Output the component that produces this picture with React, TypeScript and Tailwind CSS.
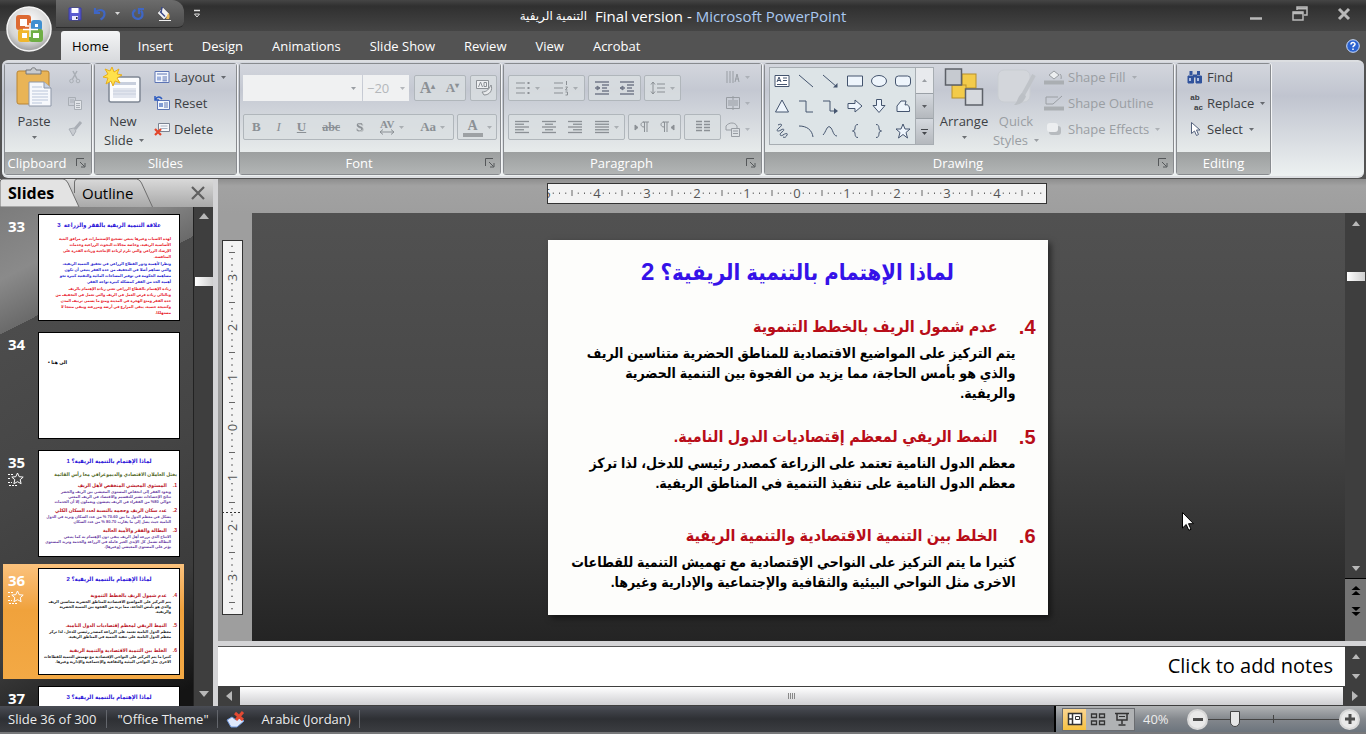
import type { ReactNode } from "react";
import { clsx } from "clsx";

const TABS = ["Home", "Insert", "Design", "Animations", "Slide Show", "Review", "View", "Acrobat"];

const SLIDE_TITLE = "لماذا الإهتمام بالتنمية الريفية؟";

interface Point {
  no: string;
  heading: string;
  lines: string[];
}

const POINTS: Point[] = [
  {
    no: "4.",
    heading: "عدم شمول الريف بالخطط التنموية",
    lines: [
      "يتم التركيز على المواضيع الاقتصادية للمناطق الحضرية متناسين الريف",
      "والذي هو بأمس الحاجة، مما يزيد من الفجوة بين التنمية الحضرية",
      "والريفية.",
    ],
  },
  {
    no: "5.",
    heading: "النمط الريفي لمعظم إقتصاديات الدول النامية.",
    lines: [
      "معظم الدول النامية تعتمد على الزراعة كمصدر رئيسي للدخل، لذا تركز",
      "معظم الدول النامية على تنفيذ التنمية في المناطق الريفية.",
    ],
  },
  {
    no: "6.",
    heading: "الخلط بين التنمية الاقتصادية والتنمية الريفية",
    lines: [
      "كثيرا ما يتم التركيز على النواحي الإقتصادية مع تهميش التنمية للقطاعات",
      "الاخرى مثل النواحي البيئية والثقافية والإجتماعية والإدارية وغيرها.",
    ],
  },
];

const SLIDE_33 = [
  {
    color: "text-[#e8202a]",
    lines: [
      "لهذه الاسباب وغيرها ينبغي تشجيع الإستثمارات في مرافق البنية",
      "الأساسية الريفية، وخاصة مجالات البحوث الزراعية وخدمات",
      "الإرشاد الزراعي والتي تلزم لزيادة الإنتاجية وزيادة القدرة على",
      "المنافسة.",
    ],
  },
  {
    color: "text-[#2a1fd0]",
    lines: [
      "ونظرا لأهمية ودور القطاع الزراعي في تحقيق التنمية الريفية،",
      "والتي تساهم أصلا في التخفيف من حدة الفقر ينبغي أن تكون",
      "مساهمة الحكومة في توفير المساحات المائية والتقنية كبيرة نحو",
      "أهمية الحد من الفقر كمشكلة كبيرة تواجه الفقر.",
    ],
  },
  {
    color: "text-[#e8202a]",
    lines: [
      "زيادة الإهتمام بالقطاع الزراعي تعني زيادة الإهتمام بالريف",
      "وبالتالي زيادة فرص العمل في الريف والتي تعمل في التخفيف من",
      "حدة الفقر ومنع الهجرة في المدينة ومنع ما يسمى ترييف المدن",
      "وكنتيجة حتمية، يبقى المزارع في أرضه ومزرعته ويبقى منتجا لا",
      "مستهلكا.",
    ],
  },
];

const SLIDE_35 = [
  {
    no: "1.",
    heading: "المستوى المعيشي المنخفض لأهل الريف",
    lines: [
      "ويعود الفقر إلى انخفاض المستوى المعيشي بين الريف والحضر",
      "نتائج الإحصاءات تشير للتقسيم والاقتصاد في الريف المعني",
      "حوالي 80% من الفقراء في الريف يعيشون ويعملون إلا أن الخدمات",
    ],
  },
  {
    no: "2.",
    heading: "عدد سكان الريف وحجمه بالنسبة لعدد السكان الكلي",
    lines: [
      "يشكل في معظم الدول ما بين 60-70 % من عدد السكان ويزيد في الدول",
      "النامية حيث يصل إلى ما يقارب 70-80 % من عدد السكان",
    ],
  },
  {
    no: "3.",
    heading: "البطالة والفقر والأمية العالية",
    lines: [
      "الانتاج الذي يزرعه أهل الريف يبقى دون الإهتمام به كما ينبغي",
      "البطالة تشمل كل الإيدي الغير عاملة في الزراعة والخدمة وتزيد المستوى",
      "يؤثر على المستوى المعيشي (وغيرها).",
    ],
  },
];

/* ---------- small shared pieces ---------- */

function Caret({ className }: { className?: string }) {
  return (
    <svg viewBox="0 0 5 3" className={clsx("h-[3px] w-[5px] shrink-0 fill-current", className)} aria-hidden="true">
      <path d="M0 0h5L2.500 3z" />
    </svg>
  );
}

function Icon({ children, box = "0 0 16 16", className = "size-4" }: { children: ReactNode; box?: string; className?: string }) {
  return (
    <svg viewBox={box} className={clsx("shrink-0", className)} fill="none" stroke="currentColor" aria-hidden="true">
      {children}
    </svg>
  );
}

function Lines({ rows }: { rows: [number, number][] }) {
  return (
    <Icon className="size-4">
      {rows.map(([x, w], i) => (
        <path key={i} d={`M${x} ${2.5 + i * 2.75}h${w}`} strokeWidth="1.300" />
      ))}
    </Icon>
  );
}

function Group({ label, width, launcher, children }: { label: string; width: string; launcher?: boolean; children: ReactNode }) {
  return (
    <section
      aria-label={label}
      className={clsx(
        "flex shrink-0 flex-col rounded-[3px] border border-[#888b8f] shadow-[1px_0_0_#f4f5f6]",
        width,
      )}
    >
      <div className="flex h-[88px] bg-linear-to-b from-[#d3d6dd] via-[#c4c8d2] via-30% to-[#e7ebeb]">{children}</div>
      <div className="flex h-[22px] items-center bg-linear-to-b from-[#9c9f9f] to-[#b2b5b5] text-white">
        <span className="flex-1 text-center whitespace-nowrap">{label}</span>
        {launcher && (
          <button type="button" aria-label={`${label} options`} className="mr-1 ml-1.5 text-[#55585a]">
            <Icon className="size-3" box="0 0 12 12">
              <path d="M1.500 9V1.500H9M5 5l4.500 4.500M10 6v4H6" />
            </Icon>
          </button>
        )}
      </div>
    </section>
  );
}

function Strip({ width, children }: { width: string; children: ReactNode }) {
  return (
    <div
      className={clsx(
        "flex h-[26px] items-center justify-around rounded-[2px] border border-[#b0b6bb] bg-[#d9dee1]/80 text-[#8b9095]",
        width,
      )}
    >
      {children}
    </div>
  );
}

function Tool({ label, caret, children }: { label: string; caret?: boolean; children: ReactNode }) {
  return (
    <button type="button" aria-label={label} className="flex h-full items-center gap-1 font-[Liberation_Serif,serif] font-bold">
      {children}
      {caret && <Caret className="opacity-60" />}
    </button>
  );
}

function RowButton({ icon, label, caret, disabled }: { icon: ReactNode; label: string; caret?: boolean; disabled?: boolean }) {
  return (
    <button
      type="button"
      disabled={disabled}
      className={clsx("flex h-[26px] items-center gap-1 whitespace-nowrap", disabled ? "text-[#9a9ea3]" : "text-[#3c3f44]")}
    >
      {icon}
      {label}
      {caret && <Caret className="ml-0.5 opacity-70" />}
    </button>
  );
}

/* ---------- title bar and tabs ---------- */

function OfficeOrb() {
  return (
    <button type="button" aria-label="Office Button" className="absolute top-1.5 left-1.5">
      <svg viewBox="0 0 46 46" className="size-[46px]" aria-hidden="true">
        <defs>
          <radialGradient id="orb" cx="50%" cy="35%" r="65%">
            <stop offset="0" stopColor="#ffffff" />
            <stop offset="0.700" stopColor="#d4d4d4" />
            <stop offset="1" stopColor="#9c9c9c" />
          </radialGradient>
        </defs>
        <circle cx="23" cy="23" r="22" fill="url(#orb)" stroke="#f4f4f4" strokeWidth="1.500" />
        <g fill="#fff" strokeWidth="4">
          <rect x="12" y="11" width="11" height="11" rx="1" stroke="#dd6a33" />
          <rect x="27" y="16" width="7" height="7" rx="1" stroke="#3f8fd0" />
          <rect x="14" y="25" width="9" height="9" rx="1" stroke="#f0b62c" />
          <rect x="25" y="25" width="10" height="9" rx="1" stroke="#6fae45" />
        </g>
        <path d="M17 23.500h15M24 17v14M19 20h4M27 28h4" stroke="#fff" strokeWidth="1.500" />
      </svg>
    </button>
  );
}

function TitleBar() {
  return (
    <div className="flex h-[31px] items-start justify-between bg-linear-to-b from-[#454545] via-[#303030] via-20% to-[#454545]">
      <div className="flex w-[230px] items-center pl-14">
        <div className="flex h-7 w-32 items-center gap-[11px] rounded-tr-xl rounded-br-md border-b border-[#2c2c2c] bg-linear-to-b from-[#6c6c6c] to-[#4b4b4b] pl-3">
          <button type="button" aria-label="Save">
            <Icon className="size-3.5" box="0 0 14 14">
              <path d="M1 1h12v12H1z" fill="#5a5bd0" stroke="#3b3ca8" />
              <path d="M3.500 1h7v5h-7z" fill="#fff" stroke="none" />
              <path d="M4 9h6v4H4z" fill="#e8e8ff" stroke="none" />
              <path d="M8 10h1.500v2H8z" fill="#333" stroke="none" />
            </Icon>
          </button>
          <button type="button" aria-label="Undo" className="flex items-center gap-2 text-[#d8d8d8]">
            <Icon className="size-3.5" box="0 0 14 14">
              <path d="M2 1v5h5M2.500 5.500C5 2 11 2 11.500 6.500c0 3-2 5-4 6" stroke="#3f66c4" strokeWidth="2.200" />
            </Icon>
            <Caret />
          </button>
          <button type="button" aria-label="Repeat">
            <Icon className="size-3.5" box="0 0 14 14">
              <path d="M4.500 3C1 4.500 1 9 4 11s7.500.5 7.500-3.500c0-1.500-.5-3-1.500-4M8 7V2h5" stroke="#3f66c4" strokeWidth="2.200" />
            </Icon>
          </button>
          <button type="button" aria-label="Shape Fill">
            <Icon className="size-4">
              <path d="M2 7l5-5 6 6-5 5z" fill="#f2f2f2" stroke="#cfcfcf" />
              <path d="M4 5.500l5 5M6 1l-1 6" stroke="#3b4a88" strokeWidth="1.500" />
              <path d="M12 7c2 1 2 4 1 6h-3z" fill="#e8b95a" stroke="none" />
              <path d="M3 14.500h12" stroke="#f0f0f0" />
            </Icon>
          </button>
        </div>
        <button type="button" aria-label="Customize Quick Access Toolbar" className="ml-2 text-[#e2e2e2]">
          <Icon className="size-2.5" box="0 0 10 10">
            <path d="M2 1.500h6" strokeWidth="1.500" />
            <path d="M2.500 5L5 8l2.500-3z" />
          </Icon>
        </button>
      </div>
      <h1 className="flex items-center gap-2 pt-[7px] text-[15px] text-white whitespace-nowrap">
        <span dir="rtl" className="text-xs">
          التنمية الريفية
        </span>
        <span>
          Final version - <span className="text-[#a9c8f0]">Microsoft PowerPoint</span>
        </span>
      </h1>
      <div className="flex w-[230px] items-center justify-end gap-7 pt-1.5 pr-3.5 text-[#b9b9b9]">
        <button type="button" aria-label="Minimize">
          <Icon>
            <path d="M2 12.500h12" strokeWidth="2.500" />
          </Icon>
        </button>
        <button type="button" aria-label="Restore">
          <Icon>
            <path d="M5 4V1h10v8h-3" strokeWidth="1.500" />
            <path d="M5 2.500h10" strokeWidth="2" />
            <path d="M1 6h10v8H1z" strokeWidth="1.500" />
            <path d="M1 7h10" strokeWidth="2.500" />
          </Icon>
        </button>
        <button type="button" aria-label="Close">
          <Icon>
            <path d="M3 3l10 10M13 3L3 13" strokeWidth="3" />
          </Icon>
        </button>
      </div>
    </div>
  );
}

function TabBar() {
  return (
    <nav aria-label="Ribbon tabs" className="flex h-[29px] gap-px bg-[#535353] pl-[58px]">
      {TABS.map((tab, i) => (
        <button
          key={tab}
          type="button"
          className={clsx(
            "mx-[3px] px-[11px]",
            i === 0 ? "rounded-t-[3px] bg-linear-to-b from-[#f4f5f6] to-[#d9dbde] text-black" : "text-white",
          )}
        >
          {tab}
        </button>
      ))}
      <button type="button" aria-label="Help" className="mr-1.5 ml-auto">
        <svg viewBox="0 0 14 14" className="size-3.5" aria-hidden="true">
          <circle cx="7" cy="7" r="6.300" fill="#2a62d0" stroke="#cfe0ff" />
          <path d="M5 5.500C5 3 9 3 9 5.300c0 1.300-2 1.500-2 3M7 9.500v1.500" stroke="#fff" strokeWidth="1.500" fill="none" />
        </svg>
      </button>
    </nav>
  );
}

/* ---------- ribbon ---------- */

function ClipboardGroup() {
  return (
    <Group label="Clipboard" width="w-[88px]" launcher>
      <button type="button" className="flex w-[58px] flex-col items-center pt-0.5 text-[#3c3f44]">
        <svg viewBox="0 0 36 40" className="h-[42px] w-9" aria-hidden="true">
          <rect x="1" y="4" width="32" height="33" rx="2" fill="#e9b456" stroke="#b98432" />
          <path d="M10 7V3h5c0-3 5-3 5 0h5v4z" fill="#c9cbce" stroke="#74777b" />
          <path d="M13 15h15l7 6v18H13z" fill="#f6f8fc" stroke="#8e97a8" />
          <path d="M28 15v6h7" fill="#c7d2e4" stroke="#8e97a8" />
          <path d="M16 20h10M16 24h16M16 27h16M16 30h16M16 33h16M16 36h10" stroke="#b9c5da" />
        </svg>
        <span className="mt-1">Paste</span>
        <Caret className="mt-1.5 opacity-70" />
      </button>
      <div className="flex flex-col items-center pl-1 text-[#a9aeb5]">
        <button type="button" aria-label="Cut" className="flex h-[26px] items-center">
          <Icon>
            <path d="M6 2l4 8M10 2L5.500 10" strokeWidth="1.500" />
            <circle cx="4.500" cy="12" r="1.800" />
            <circle cx="11" cy="12" r="1.800" />
          </Icon>
        </button>
        <button type="button" aria-label="Copy" className="flex h-[26px] items-center">
          <Icon>
            <path d="M1.500 2.500h7v8h-7zM3 5h4M3 7h4" />
            <path d="M7.500 5.500h7v9h-7z" fill="#e2e5e9" />
            <path d="M9 8.500h4M9 10.500h4M9 12.500h4" />
          </Icon>
        </button>
        <button type="button" aria-label="Format Painter" className="flex h-[26px] items-center">
          <Icon>
            <path d="M14 1L8 8" strokeWidth="3" />
            <path d="M2 8l5-1 2 3-3 5z" fill="#c8ccd1" />
          </Icon>
        </button>
      </div>
    </Group>
  );
}

function SlidesGroup() {
  return (
    <Group label="Slides" width="w-[143px]">
      <button type="button" className="flex w-14 flex-col items-center pt-0.5 leading-[19px] text-[#3c3f44]">
        <svg viewBox="0 0 40 40" className="h-[42px] w-10" aria-hidden="true">
          <rect x="6" y="10" width="31" height="25" rx="2" fill="#fbfcfe" stroke="#7f8794" strokeWidth="1.500" />
          <rect x="10" y="15" width="23" height="3" fill="#c8cfdd" />
          <rect x="10" y="21" width="23" height="10" fill="#e1e5ee" />
          <path d="M10 24h23M10 27h23" stroke="#c8cfdd" />
          <path d="M9 0l2 5 5-3-2 5 5 1-5 3 3 5-5-2-2 5-2-5-5 3 2-6-5-1 5-3-3-5 5 2z" fill="#ffe14a" stroke="#e8ae1c" />
        </svg>
        <span className="mt-1">New</span>
        <span className="flex items-center gap-1.5 pl-0.5">
          Slide <Caret className="opacity-70" />
        </span>
      </button>
      <div className="pl-[3px]">
        <RowButton
          label="Layout"
          caret
          icon={
            <Icon>
              <path d="M1 2.500h14v11H1z" fill="#f4f7fd" stroke="#5c74b4" />
              <path d="M3 5h10" stroke="#5c74b4" />
              <path d="M3 7.500h4v4H3z" fill="#9fb2de" stroke="none" />
              <path d="M8.500 8h4.500M8.500 10h4.500M8.500 11.800h4.500" stroke="#5c74b4" />
            </Icon>
          }
        />
        <RowButton
          label="Reset"
          icon={
            <Icon>
              <path d="M3.500 5.500h12v9h-12z" fill="#f4f7fd" stroke="#5c74b4" />
              <path d="M5 8h4v4H5z" fill="#7f9ad4" stroke="none" />
              <path d="M10 8h4M10 10h4M10 12h4" stroke="#5c74b4" />
              <path d="M1 1v4h4M1.500 4.500C3 1.500 6 1 8 4" stroke="#2d5bc0" strokeWidth="1.500" />
            </Icon>
          }
        />
        <RowButton
          label="Delete"
          icon={
            <Icon>
              <path d="M4.500 2.500h11v8h-11z" fill="#f6f8fb" stroke="#7b8391" />
              <path d="M6.500 5h7M6.500 7.500h7" stroke="#a9b2c2" />
              <path d="M1 8l6 6M7 8l-6 6" stroke="#e2452a" strokeWidth="2.200" />
            </Icon>
          }
        />
      </div>
    </Group>
  );
}

function FontGroup() {
  return (
    <Group label="Font" width="w-[262px]" launcher>
      <div className="flex flex-1 flex-col gap-[13px] px-[3px] pt-[11px]">
        <div className="flex justify-between">
          <div className="flex gap-px">
            <label className="flex h-[26px] w-[119px] items-center bg-[#f0f1f2] pr-1.5 text-[#9a9ea3]">
              <input aria-label="Font" className="min-w-0 flex-1 bg-transparent outline-none" />
              <Caret />
            </label>
            <label className="flex h-[26px] w-[46px] items-center bg-[#f0f1f2] pr-1 pl-1 text-[#b4b7bb]">
              <input aria-label="Font size" defaultValue="−20" className="min-w-0 flex-1 bg-transparent outline-none" />
              <Caret />
            </label>
          </div>
          <Strip width="w-[52px]">
            <Tool label="Grow Font">
              <span className="text-base">
                A<sup className="text-[8px]">▴</sup>
              </span>
            </Tool>
            <Tool label="Shrink Font">
              <span>
                A<sup className="text-[8px]">▾</sup>
              </span>
            </Tool>
          </Strip>
          <Strip width="w-[27px]">
            <Tool label="Clear Formatting">
              <Icon className="size-5" box="0 0 20 20">
                <path d="M2.500 2.500h12v8h-12z" fill="#eef0f2" />
                <path d="M4.500 9l2-5 2 5M10 4.500h2.500v4H10z" />
                <path d="M17 7c2 5-1 10-7 10l-2-3c5 0 7-3 9-7z" fill="#e9ebed" />
              </Icon>
            </Tool>
          </Strip>
        </div>
        <div className="flex justify-between">
          <Strip width="w-[211px]">
            <Tool label="Bold">B</Tool>
            <Tool label="Italic">
              <i className="font-normal">I</i>
            </Tool>
            <Tool label="Underline">
              <u>U</u>
            </Tool>
            <Tool label="Strikethrough">
              <s className="text-xs">abc</s>
            </Tool>
            <Tool label="Text Shadow">
              <span className="drop-shadow-[1px_1px_0_#b4b8bb]">S</span>
            </Tool>
            <Tool label="Character Spacing" caret>
              <span className="flex flex-col items-center text-[11px] leading-[9px]">
                AV
                <Icon className="h-1.5 w-4" box="0 0 16 6">
                  <path d="M1 3h14M4 .5L1 3l3 2.500M12 .5L15 3l-3 2.500" />
                </Icon>
              </span>
            </Tool>
            <Tool label="Change Case" caret>
              Aa
            </Tool>
          </Strip>
          <Strip width="w-10">
            <Tool label="Font Color" caret>
              <span className="w-5 border-b-4 border-[#9da1a4] text-center text-sm leading-[15px]">A</span>
            </Tool>
          </Strip>
        </div>
      </div>
    </Group>
  );
}

function ParagraphGroup() {
  return (
    <Group label="Paragraph" width="w-[259px]" launcher>
      <div className="flex flex-col gap-[13px] pt-[11px] pl-1">
        <div className="flex gap-[3px]">
          <Strip width="w-[77px]">
            <Tool label="Bullets" caret>
              <Icon>
                <path d="M1 3h9M1 8h9M1 13h9" />
                <path d="M12.500 3h2M12.500 8h2M12.500 13h2" strokeWidth="2" />
              </Icon>
            </Tool>
            <Tool label="Numbering" caret>
              <Icon>
                <path d="M1 3h9M1 8h9M1 13h9M13.500 1v4M12.500 7h2l-2 3h2M12.500 12h2v3h-2" />
              </Icon>
            </Tool>
          </Strip>
          <Strip width="w-[53px]">
            <Tool label="Decrease List Level">
              <Icon className="size-4 text-[#747b8a]">
                <path d="M1 2h14M8 5h7M8 8h5M8 11h7M1 14h14M1 8h5" strokeWidth="1.500" />
                <path d="M3 6v4l3-2z" fill="currentColor" />
              </Icon>
            </Tool>
            <Tool label="Increase List Level">
              <Icon className="size-4 text-[#747b8a]">
                <path d="M1 2h14M8 5h7M8 8h5M8 11h7M1 14h14M1 8h5" strokeWidth="1.500" />
                <path d="M4 6v4L1 8z" fill="currentColor" />
              </Icon>
            </Tool>
          </Strip>
          <Strip width="w-[37px]">
            <Tool label="Line Spacing" caret>
              <Icon>
                <path d="M3 2v12M1 4.500L3 2l2 2.500M1 11.500L3 14l2-2.500M7 4h8M7 8h8M7 12h8" />
              </Icon>
            </Tool>
          </Strip>
        </div>
        <div className="flex gap-[3px]">
          <Strip width="w-[117px]">
            <Tool label="Align Left">
              <Lines rows={[[1, 14], [1, 9], [1, 14], [1, 9], [1, 14]]} />
            </Tool>
            <Tool label="Center">
              <Lines rows={[[1, 14], [4, 8], [1, 14], [4, 8], [1, 14]]} />
            </Tool>
            <Tool label="Align Right">
              <Lines rows={[[1, 14], [6, 9], [1, 14], [6, 9], [1, 14]]} />
            </Tool>
            <Tool label="Justify" caret>
              <Lines rows={[[1, 14], [1, 14], [1, 14], [1, 14], [1, 14]]} />
            </Tool>
          </Strip>
          <Strip width="w-[53px]">
            <Tool label="Left-to-Right">
              <Icon>
                <path d="M1 6v5l3-2.500z" fill="currentColor" />
                <path d="M9 3h6M10.500 3v10M13 3v10M10 3c-4 0-4 5 0 5" />
              </Icon>
            </Tool>
            <Tool label="Right-to-Left">
              <Icon>
                <path d="M15 6v5l-3-2.500z" fill="currentColor" />
                <path d="M4 3h6M5.500 3v10M8 3v10M5 3C1 3 1 8 5 8" />
              </Icon>
            </Tool>
          </Strip>
          <Strip width="w-[37px]">
            <Tool label="Columns">
              <Icon>
                <path d="M1 2.500h6M1 5.500h6M1 8.500h6M1 11.500h6M9 2.500h6M9 5.500h6M9 8.500h6M9 11.500h6" strokeWidth="1.500" />
              </Icon>
            </Tool>
          </Strip>
        </div>
      </div>
      <div className="ml-auto flex w-9 flex-col text-[#989da3]">
        {[
          { label: "Text Direction", d: "M2 2v12M5 2v12M8 2v12M10 13l2-8 2 8M10.500 10h3.500" },
          { label: "Align Text", d: "M1.500 2.500h13v11h-13zM8 1v4M8 15v-4M3 8h10M3 10h10M3 6h10" },
          { label: "Convert to SmartArt", d: "M1 5c3-4 9-4 11 0v2M1 5v4h5M6.500 7.500h8v8h-8zM8 10h5M8 12.500h5" },
        ].map((t) => (
          <button key={t.label} type="button" aria-label={t.label} className="flex h-[26px] items-center gap-1">
            <Icon>
              <path d={t.d} />
            </Icon>
            <Caret className="opacity-60" />
          </button>
        ))}
      </div>
    </Group>
  );
}

const SHAPES: { name: string; node: ReactNode }[] = [
  {
    name: "Text Box",
    node: (
      <>
        <path d="M1 2.500h14v11H1z" fill="#fff" />
        <path d="M3 9l2-5 2 5M3.500 7.500h3M9 5h4M9 7.500h4M3 11.500h10" />
      </>
    ),
  },
  { name: "Line", node: <path d="M1 2l14 12" /> },
  {
    name: "Arrow",
    node: (
      <>
        <path d="M1 2l14 12" />
        <path d="M15.500 14.500V10l-4.500 4.500z" fill="currentColor" stroke="none" />
      </>
    ),
  },
  { name: "Rectangle", node: <path d="M.5 3h15v10H.5z" fill="#eef5fc" /> },
  { name: "Oval", node: <ellipse cx="8" cy="8" rx="7.500" ry="5.500" fill="#eef5fc" /> },
  { name: "Rounded Rectangle", node: <rect x=".5" y="3" width="15" height="10" rx="3" fill="#eef5fc" /> },
  { name: "Triangle", node: <path d="M8 2l6.500 12h-13z" fill="#eef5fc" /> },
  { name: "Elbow Connector", node: <path d="M1 3h7v11h7" /> },
  {
    name: "Elbow Arrow",
    node: (
      <>
        <path d="M1 3h7v10h5" />
        <path d="M12 10l4 3-4 3z" fill="currentColor" stroke="none" />
      </>
    ),
  },
  { name: "Right Arrow", node: <path d="M1 5.500h7V2l7 6-7 6v-3.500H1z" fill="#eef5fc" /> },
  { name: "Down Arrow", node: <path d="M5.500 1.500h5v6H14L8 14.500 2 7.500h3.500z" fill="#eef5fc" /> },
  { name: "Freeform", node: <path d="M2 13.500V8l4-5h5l-1 4c3-1 5 1 4.500 6.500z" fill="#eef5fc" /> },
  { name: "Scribble", node: <path d="M4 2c4-2 5 0 1 3s-1 4 2 2 4 0 1 2-2 5 1 3 5-2 4 0-2 3-4 2" /> },
  { name: "Arc", node: <path d="M1 3c8 0 13 4 14 11" /> },
  { name: "Curve", node: <path d="M1 12C4 9 5 2 8 4s3 9 7 9" /> },
  { name: "Left Brace", node: <path d="M11 1.500C6 1.500 10 8 5.500 8c4.500 0 .5 6.500 5.500 6.500" /> },
  { name: "Right Brace", node: <path d="M5 1.500C10 1.500 6 8 10.500 8 6 8 10 14.500 5 14.500" /> },
  { name: "Star", node: <path d="M8 1l2 5h5l-4 3.500 1.500 5.500L8 11.500 3.500 15 5 9.500 1 6h5z" fill="#eef5fc" /> },
];

function DrawingGroup() {
  return (
    <Group label="Drawing" width="w-[410px]" launcher>
      <div className="mt-[3px] ml-1 flex h-[78px] w-[165px] shrink-0 border border-[#a7adb2]">
        <div className="grid flex-1 grid-cols-6 place-items-center bg-[#dde4e7] text-[#44546e]">
          {SHAPES.map((s) => (
            <button key={s.name} type="button" aria-label={s.name}>
              <Icon>{s.node}</Icon>
            </button>
          ))}
        </div>
        <div className="flex w-[18px] flex-col divide-y divide-[#9aa0a6] border-l border-[#a7adb2]">
          <button type="button" aria-label="Previous shapes" className="flex flex-1 items-center justify-center bg-[#e8eaed] text-[#9a9ea3]">
            <Caret className="rotate-180" />
          </button>
          <button type="button" aria-label="Next shapes" className="flex flex-1 items-center justify-center bg-linear-to-b from-[#d5d9df] to-[#b4b8bd] text-[#5a5d62]">
            <Caret />
          </button>
          <button type="button" aria-label="More shapes" className="flex flex-1 flex-col items-center justify-center gap-0.5 bg-linear-to-b from-[#d5d9df] to-[#b4b8bd] text-[#44474c]">
            <span className="h-px w-[7px] bg-current" />
            <Caret />
          </button>
        </div>
      </div>
      <button type="button" className="flex w-[60px] flex-col items-center pt-0.5 text-[#3c3f44]">
        <svg viewBox="0 0 40 40" className="h-[42px] w-10" aria-hidden="true">
          <rect x="18" y="7" width="14" height="14" fill="#f3cb4a" stroke="#b7902a" />
          <rect x="8" y="18" width="14" height="13" fill="#f3cb4a" stroke="#b7902a" />
          <rect x="1.500" y="2" width="16" height="16" fill="#c6cad0" stroke="#5d6168" strokeWidth="1.500" />
          <rect x="21.500" y="22" width="17" height="16" fill="#d6d9de" stroke="#5d6168" strokeWidth="1.500" />
        </svg>
        <span className="mt-1">Arrange</span>
        <Caret className="mt-1.5 opacity-70" />
      </button>
      <button type="button" disabled className="flex w-11 flex-col items-center pt-0.5 leading-[19px] text-[#9a9ea3]">
        <svg viewBox="0 0 40 40" className="h-[42px] w-10" aria-hidden="true">
          <rect x="2" y="3" width="32" height="32" rx="6" fill="#d3d6db" stroke="#c9cdd2" />
          <path d="M38 8L27 28" stroke="#bfc3c8" strokeWidth="4" />
          <path d="M26 26l4 3c-2 6-6 9-12 9 4-3 3-8 8-12z" fill="#bcc0c5" />
        </svg>
        <span className="mt-1">Quick</span>
        <span className="flex items-center gap-1.5">
          Styles <Caret />
        </span>
      </button>
      <div className="pl-1.5">
        <RowButton
          disabled
          caret
          label="Shape Fill"
          icon={
            <Icon className="h-4 w-5" box="0 0 20 16">
              <path d="M5 6l5-4 5 4-5 4z" fill="#eceef0" />
              <path d="M16 5c2 2 1 4 1 5" />
              <path d="M0 13.500h20" strokeWidth="4" stroke="#aaaeb2" />
            </Icon>
          }
        />
        <RowButton
          disabled
          label="Shape Outline"
          icon={
            <Icon className="h-4 w-5" box="0 0 20 16">
              <path d="M2 9V2h12M18 1L9 9H2" />
              <path d="M0 13.500h20" strokeWidth="4" stroke="#aaaeb2" />
            </Icon>
          }
        />
        <RowButton
          disabled
          caret
          label="Shape Effects"
          icon={
            <Icon className="h-4 w-5" box="0 0 20 16">
              <rect x="5" y="5" width="12" height="9" rx="3" fill="#b7bbbf" stroke="none" />
              <rect x="3" y="2" width="11" height="9" rx="3" fill="#eceef0" stroke="none" />
            </Icon>
          }
        />
      </div>
    </Group>
  );
}

function EditingGroup() {
  return (
    <Group label="Editing" width="w-[95px]">
      <div className="pl-2.5">
        <RowButton
          label="Find"
          icon={
            <Icon className="size-4 text-[#30539c]">
              <path d="M4 2v4M11.500 2v4" strokeWidth="3" />
              <path d="M1 7h5.500v7H1zM9 7h5.500v7H9z" fill="#30539c" />
              <path d="M3 9v3M11 9v3" stroke="#dbe6fb" strokeWidth="1.500" />
              <path d="M6 7h4" strokeWidth="3" />
            </Icon>
          }
        />
        <RowButton
          caret
          label="Replace"
          icon={
            <span
              className="flex w-4 flex-col gap-0.5 font-[Liberation_Sans,sans-serif] text-[8px] leading-[8px] font-bold"
              aria-hidden="true"
            >
              <span>ab</span>
              <span className="self-end">ac</span>
            </span>
          }
        />
        <RowButton
          caret
          label="Select"
          icon={
            <Icon>
              <path d="M4.500 1.500v11l3-2.500 2 4.500 2-1-2-4.500h3.500z" fill="#fff" stroke="#53617c" />
            </Icon>
          }
        />
      </div>
    </Group>
  );
}

function Ribbon() {
  return (
    <div className="bg-[#535353] px-0.5 pb-px">
      <div className="flex gap-0.5 rounded-md border-t-2 border-b-2 border-[#dcdee1] bg-linear-to-b from-[#d3d6dd] via-[#c0c4cf] via-30% to-[#edf1f1] px-0.5 py-px">
        <ClipboardGroup />
        <SlidesGroup />
        <FontGroup />
        <ParagraphGroup />
        <DrawingGroup />
        <EditingGroup />
      </div>
    </div>
  );
}

/* ---------- thumbnails ---------- */

function TransitionStar() {
  return (
    <Icon className="size-4 text-white">
      <path d="M9.500 2l1.700 3.700 4 .4-3 2.600.9 4-3.600-2-3.600 2 .9-4-3-2.600 4-.4z" />
      <path d="M0 3.500h5M0 7.500h3M0 11.500h4M1 14.500h9" strokeDasharray="2 1" />
    </Icon>
  );
}

function Thumb({ no, star, selected, children }: { no: number; star?: boolean; selected?: boolean; children: ReactNode }) {
  return (
    <li
      className={clsx(
        "ml-[3px] flex h-[115px] w-[181px] shrink-0 pt-1",
        selected && "bg-linear-to-b from-[#fbc27c] via-[#f0a23c] via-40% to-[#f3a945]",
      )}
    >
      <div className="w-[35px] pt-[3px] pl-[5px] text-[15px] font-bold text-white">
        {no}
        {star && <TransitionStar />}
      </div>
      <div
        dir="rtl"
        className="h-[107px] w-[142px] overflow-hidden border border-black bg-white font-[Liberation_Sans,DejaVu_Sans_Condensed,DejaVu_Sans,sans-serif] font-bold whitespace-nowrap"
      >
        {children}
      </div>
    </li>
  );
}

function ThumbTitle({ children }: { children: ReactNode }) {
  return <p className="pt-1.5 text-center text-[6px] leading-[9px] text-[#2b12d8]">{children}</p>;
}

function ThumbPoint({ point, body, className }: { point: Point; body: string; className?: string }) {
  return (
    <div className={clsx("pr-0.5", className)}>
      <p className="flex gap-1.5 text-[5px] leading-[7px] text-[#b90f1c]">
        <span>{point.no}</span>
        <span>{point.heading}</span>
      </p>
      <div className={clsx("pr-1.5 text-[4px] leading-[5px]", body)}>
        {point.lines.map((l) => (
          <p key={l}>{l}</p>
        ))}
      </div>
    </div>
  );
}

function SlidesPane() {
  return (
    <aside className="flex w-[213px] shrink-0 flex-col">
      <div className="flex h-7 shrink-0 items-stretch bg-linear-to-b from-[#d9d9d9] to-[#a9a9a9] text-base text-black">
        <button type="button" className="relative w-[74px] pl-2 text-left font-bold">
          <svg viewBox="0 0 80 28" className="absolute inset-0 h-7 w-20" aria-hidden="true">
            <path d="M0 28V3q0-3 3-3h60q3 0 5 4l11 24z" fill="#e3e3e3" stroke="#6e6e6e" />
          </svg>
          <span className="relative">Slides</span>
        </button>
        <button type="button" className="relative w-20 pl-2 text-left text-[15px]">
          <svg viewBox="0 0 80 28" className="absolute inset-0 h-7 w-20" fill="none" stroke="#6e6e6e" aria-hidden="true">
            <path d="M.5 14V3q0-3 3-3h59q3 0 5 4l11 24" />
          </svg>
          <span className="relative">Outline</span>
        </button>
        <button type="button" aria-label="Close pane" className="mr-[7px] ml-auto text-[#606060]">
          <Icon>
            <path d="M2 2l12 12M14 2L2 14" strokeWidth="2.200" />
          </Icon>
        </button>
      </div>
      <div className="flex min-h-0 flex-1 bg-[linear-gradient(153deg,#7c7c7c_0%,#8a8a8a_12%,#6a6a6a_21%,#4c4c4c_21%,#454545_50%,#3c3c3c_75%,#141414_95%)]">
        <ol className="flex min-w-0 flex-1 flex-col gap-[3px] overflow-hidden pt-[3px]">
          <Thumb no={33}>
            <ThumbTitle>علاقة التنمية الريفية بالفقر والزراعة&nbsp; 3</ThumbTitle>
            <div className="pt-1.5 pr-2 text-[4px] leading-[6px]">
              {SLIDE_33.map((p, i) => (
                <ul key={i} className={clsx("pb-px", p.color)}>
                  {p.lines.map((l) => (
                    <li key={l}>{l}</li>
                  ))}
                </ul>
              ))}
            </div>
          </Thumb>
          <Thumb no={34}>
            <p className="pt-5 pr-28 text-[5px] text-black">الى هنا •</p>
          </Thumb>
          <Thumb no={35} star>
            <ThumbTitle>{SLIDE_TITLE} 1</ThumbTitle>
            <p className="pt-1 pr-0.5 text-[5px] leading-[9px] text-[#50661c]">يختل العاملان الاقتصادي والديموغرافي معا رأس القائمة</p>
            {SLIDE_35.map((p) => (
              <ThumbPoint key={p.no} point={p} className="pt-[3px]" body="text-[#6c3fa4]" />
            ))}
          </Thumb>
          <Thumb no={36} star selected>
            <ThumbTitle>{SLIDE_TITLE} 2</ThumbTitle>
            {POINTS.map((p) => (
              <ThumbPoint key={p.no} point={p} className="pt-2" body="text-[#222]" />
            ))}
          </Thumb>
          <Thumb no={37}>
            <ThumbTitle>{SLIDE_TITLE} 3</ThumbTitle>
          </Thumb>
        </ol>
        <div className="flex w-5 flex-col items-center border-l border-[#222] bg-[#3e3e3e] text-[#b8b8b8]">
          <button type="button" aria-label="Scroll up" className="flex h-[18px] items-center">
            <Caret className="h-1.5! w-2.5! rotate-180" />
          </button>
          <div className="mt-[52px] h-[9px] w-[18px] bg-linear-to-r from-white to-[#cfcfcf]" />
          <button type="button" aria-label="Scroll down" className="mt-auto flex h-6 items-center">
            <Caret className="h-1.5! w-2.5!" />
          </button>
        </div>
      </div>
    </aside>
  );
}

/* ---------- editor ---------- */

function HorizontalRuler() {
  const marks = Array.from({ length: 80 }, (_, i) => i).filter((i) => i % 8 !== 0);
  return (
    <svg viewBox="1 1 498 19" className="h-[21px] w-[500px] border border-[#333] bg-[#f3f3f3]" aria-hidden="true">
      {marks.map((i) => (
        <path key={i} d={i % 8 === 4 ? `M${i * 6.25} 7v6` : `M${i * 6.25} 9.500v1.500`} stroke="#666" />
      ))}
      {[5, 4, 3, 2, 1, 0, 1, 2, 3, 4].map((n, i) => (
        <text key={i} x={i * 50} y="15" textAnchor="middle" fontSize="13" fill="#555">
          {n}
        </text>
      ))}
    </svg>
  );
}

function VerticalRuler() {
  const marks = Array.from({ length: 59 }, (_, i) => i + 1).filter((i) => (i - 30) % 8 !== 0);
  return (
    <svg viewBox="1 1 19 373" className="h-[375px] w-[21px] border border-[#333] bg-[#f3f3f3]" aria-hidden="true">
      {marks.map((i) => (
        <path key={i} d={(i - 30) % 4 === 0 ? `M7 ${i * 6.25}h6` : `M9 ${i * 6.25}h2`} stroke="#666" />
      ))}
      {[3, 2, 1, 0, 1, 2, 3].map((n, i) => (
        <text key={i} transform={`translate(15 ${37.5 + i * 50}) rotate(-90)`} textAnchor="middle" fontSize="13" fill="#555">
          {n}
        </text>
      ))}
      <path d="M0 272.500h21" stroke="#333" strokeDasharray="2 2" />
    </svg>
  );
}

function Slide() {
  return (
    <article
      dir="rtl"
      className="h-[375px] w-[500px] shrink-0 bg-[#fdfdfb] pt-4 font-[Liberation_Sans,DejaVu_Sans_Condensed,DejaVu_Sans,sans-serif] font-bold whitespace-nowrap shadow-[3px_3px_6px_rgba(0,0,0,0.5)]"
    >
      <h2 className="text-center text-[22px] leading-8 text-[#3512e8]">
        {SLIDE_TITLE} <span className="text-2xl leading-8">2</span>
      </h2>
      {POINTS.map((p, i) => (
        <section key={p.no} className={clsx("pr-3", i === 0 ? "mt-[26px]" : i === 1 ? "mt-[22px]" : "mt-[31px]")}>
          <h3 className="flex text-base leading-6 text-[#b80d18]">
            <span className="w-[38px] text-xl leading-6">{p.no}</span>
            <span>{p.heading}</span>
          </h3>
          <div className="mt-1 pr-5 text-sm leading-5 text-black">
            {p.lines.map((l) => (
              <p key={l}>{l}</p>
            ))}
          </div>
        </section>
      ))}
    </article>
  );
}

function Editor() {
  return (
    <main className="flex min-w-0 flex-1 flex-col border-l-[5px] border-[#d4d4d6] bg-[#9e9e9e]">
      <div className="flex h-[34px] shrink-0 items-center justify-center bg-linear-to-b from-[#8e8e8e] via-[#a2a2a2] via-20% to-[#9e9e9e] pr-6 pb-1.5 pl-[34px]">
        <HorizontalRuler />
      </div>
      <div className="flex min-h-0 flex-1">
        <div className="flex w-[34px] shrink-0 items-center pl-1">
          <VerticalRuler />
        </div>
        <div className="flex min-w-0 flex-1 items-center justify-center bg-linear-to-b from-[#515151] via-[#484848] via-45% to-[#242424] pr-0.5">
          <Slide />
        </div>
        <div className="flex w-[21px] flex-col items-center bg-[#3e3e3e] text-[#b8b8b8]">
          <button type="button" aria-label="Scroll slide up" className="flex h-5 items-center">
            <Caret className="h-[5px]! w-2! rotate-180" />
          </button>
          <div className="mt-[39px] h-[9px] w-[18px] bg-linear-to-r from-white to-[#cfcfcf]" />
          <button type="button" aria-label="Scroll slide down" className="mt-auto flex h-5 items-center">
            <Caret className="h-[5px]! w-2.5!" />
          </button>
          <div className="flex h-[63px] w-full flex-col items-center gap-1 border-t border-black bg-[#747474] pt-1 text-black">
            <button type="button" aria-label="Previous slide">
              <Icon className="size-4">
                <path d="M3.500 7L8 3l4.500 4zM3.500 12L8 8l4.500 4z" fill="currentColor" stroke="none" />
              </Icon>
            </button>
            <button type="button" aria-label="Next slide">
              <Icon className="size-4">
                <path d="M3.500 4L8 8l4.500-4zM3.500 9L8 13l4.500-4z" fill="currentColor" stroke="none" />
              </Icon>
            </button>
          </div>
        </div>
      </div>
      <div className="flex h-[45px] shrink-0 border-t-[5px] border-[#d4d4d6] bg-white">
        <textarea
          aria-label="Notes"
          defaultValue="Click to add notes"
          className="min-w-0 flex-1 resize-none overflow-hidden border-t border-[#555] pt-[5px] pr-3 text-right text-xl text-black outline-none"
        />
        <div className="flex w-[21px] flex-col items-center justify-around bg-[#3e3e3e] text-[#b8b8b8]">
          <button type="button" aria-label="Scroll notes up">
            <Caret className="h-[5px]! w-2! rotate-180" />
          </button>
          <button type="button" aria-label="Scroll notes down">
            <Caret className="h-[5px]! w-2.5!" />
          </button>
        </div>
      </div>
      <div className="flex h-5 shrink-0 items-center bg-[#3e3e3e] text-[#b8b8b8]">
        <button type="button" aria-label="Scroll left" className="flex w-[22px] justify-center">
          <Caret className="h-1.5! w-2.5! rotate-90" />
        </button>
        <div className="flex h-[18px] flex-1 items-center justify-center gap-px bg-linear-to-b from-white to-[#cfcfd2]">
          {[0, 1, 2, 3].map((i) => (
            <span key={i} className="h-1.5 w-px bg-[#888]" />
          ))}
        </div>
        <button type="button" aria-label="Scroll right" className="flex w-[23px] justify-center">
          <Caret className="h-1.5! w-2.5! -rotate-90" />
        </button>
      </div>
    </main>
  );
}

function StatusBar() {
  return (
    <footer className="flex h-7 shrink-0 items-center border-b-2 border-[#77787a] bg-linear-to-b from-[#4a4d55] via-[#2e3034] via-50% to-[#3b3d41] text-[#ececec]">
      <span className="border-r border-[#63666c] pr-2.5 pl-2">Slide 36 of 300</span>
      <span className="border-r border-[#63666c] pr-2 pl-2.5">"Office Theme"</span>
      <button type="button" aria-label="Spelling" className="mx-2">
        <svg viewBox="0 0 20 18" className="h-[18px] w-5" aria-hidden="true">
          <path d="M1 10l5-3 4 3 4-2 4 3-7 6H5z" fill="#dfe9fb" stroke="#6f97dc" />
          <path d="M9 3l8 7M17 2l-7 8" stroke="#e34a33" strokeWidth="3" />
        </svg>
      </button>
      <span className="border-r border-[#63666c] px-2">Arabic (Jordan)</span>
      <div className="ml-auto flex h-full items-center border-l-2 border-black bg-linear-to-b from-[#b2b4b6] via-[#84888d] via-50% to-[#6c747d] pl-1.5">
        <div className="flex h-[23px] border border-[#6a6c70] bg-[#b0b2b4] text-[#333]">
          <button type="button" aria-label="Normal view" className="flex w-[23px] items-center justify-center bg-linear-to-b from-[#fbd690] to-[#f6c13d]">
            <Icon>
              <path d="M1.500 2.500h13v11h-13z" fill="#fff" strokeWidth="1.500" />
              <path d="M5.500 3v10M1.500 8h4" strokeWidth="1.500" />
              <path d="M8.500 5.500h4v3h-4z" />
            </Icon>
          </button>
          <button type="button" aria-label="Slide sorter" className="flex w-6 items-center justify-center">
            <Icon>
              <path d="M1.500 3h5v3.500h-5zM9.500 3h5v3.500h-5zM1.500 10h5v3.500h-5zM9.500 10h5v3.500h-5z" strokeWidth="1.300" />
            </Icon>
          </button>
          <button type="button" aria-label="Slide show" className="flex w-6 items-center justify-center">
            <Icon>
              <path d="M1 2.500h14M3 3v6h10V3M8 9v4M4.500 14h7" strokeWidth="1.500" />
              <path d="M5 5.500h6" />
            </Icon>
          </button>
        </div>
        <span className="w-[52px] pl-2">40%</span>
        <button type="button" aria-label="Zoom out" className="flex size-[21px] items-center justify-center rounded-full border-2 border-[#d8d8d8] bg-[#e9e9e9]">
          <span className="h-[3px] w-2.5 bg-[#4c4c4c]" />
        </button>
        <input
          type="range"
          aria-label="Zoom"
          min="0"
          max="100"
          defaultValue="18"
          className="h-4 w-[131px] appearance-none bg-[linear-gradient(#444,#444),linear-gradient(#444,#444)] bg-[length:100%_1px,1px_8px] bg-center bg-no-repeat [&::-webkit-slider-thumb]:h-4 [&::-webkit-slider-thumb]:w-2.5 [&::-webkit-slider-thumb]:appearance-none [&::-webkit-slider-thumb]:rounded-b-[5px] [&::-webkit-slider-thumb]:border [&::-webkit-slider-thumb]:border-[#444] [&::-webkit-slider-thumb]:bg-[#e6e6e6]"
        />
        <button type="button" aria-label="Zoom in" className="mr-1.5 flex size-[21px] items-center justify-center rounded-full border-2 border-[#d8d8d8] bg-[#e9e9e9] text-[#4c4c4c]">
          <Icon className="size-3" box="0 0 12 12">
            <path d="M6 1v10M1 6h10" strokeWidth="3" />
          </Icon>
        </button>
      </div>
    </footer>
  );
}

export default function App() {
  return (
    <div className="relative flex h-screen flex-col overflow-hidden bg-[#535353] font-[Open_Sans,DejaVu_Sans,sans-serif] text-[13px] leading-[18px]">
      <header className="relative shrink-0">
        <TitleBar />
        <TabBar />
        <OfficeOrb />
        <Ribbon />
      </header>
      <div className="flex min-h-0 flex-1">
        <SlidesPane />
        <Editor />
      </div>
      <StatusBar />
      {/* mouse pointer resting over the canvas */}
      <svg viewBox="0 0 12 19" className="absolute top-[512px] left-[1182px] h-[19px] w-3" aria-hidden="true">
        <path d="M.5 .5v15.500l3.700-3.500 2.600 5.800 2.200-1-2.500-5.600h5z" fill="#fff" stroke="#000" />
      </svg>
    </div>
  );
}
